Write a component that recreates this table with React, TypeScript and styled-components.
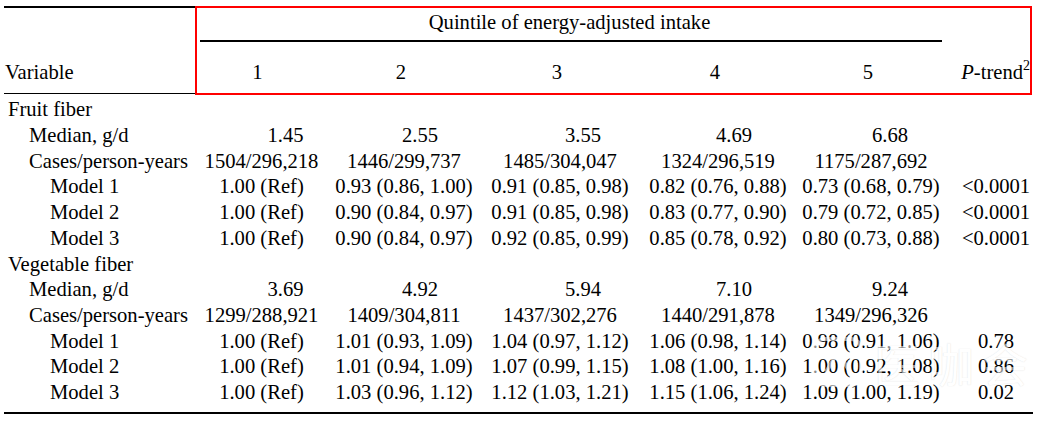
import React from 'react';
import styled, { createGlobalStyle } from 'styled-components';

const Global = createGlobalStyle`
  html, body { margin: 0; padding: 0; background: #fff; overflow: hidden; }
  body { font-family: "Liberation Serif", "Times New Roman", serif; color: #000; }
`;

const COLS = '195px 125px 160px 152px 164px 142px 108px';
const ROW_H = 25.7;

const Page = styled.div`
  position: relative;
  width: 1043px;
  height: 423px;
  padding: 6px 0 0 4px;
  box-sizing: border-box;
  font-size: 20.6px;
  line-height: ${ROW_H}px;
`;

const HeaderRow = styled.div`
  display: grid;
  grid-template-columns: 191px 837px;
  align-items: start;
`;

const VariableCell = styled.div`
  height: 88px;
  box-sizing: border-box;
  border-top: 2px solid #000;
  border-bottom: 1px solid #000;
  display: flex;
  align-items: flex-end;
  padding: 0 0 6.9px 1px;
`;

const HighlightBox = styled.div`
  height: 89px;
  box-sizing: border-box;
  border: 2px solid #f00;
  display: grid;
  grid-template-columns: 127px 160px 152px 164px 142px 1fr;
  grid-template-rows: auto auto auto;
  align-content: start;
`;

const QuintileTitle = styled.div`
  grid-row: 1;
  grid-column: 1 / 6;
  text-align: center;
  padding-top: 2px;
`;

const Rule = styled.div`
  grid-row: 2;
  grid-column: 1 / 6;
  height: 2px;
  margin: 4.3px 0 0 3px;
  background: #000;
`;

const ColNum = styled.div<{ $end?: boolean }>`
  grid-row: 3;
  margin-top: 18.4px;
  text-align: ${(p) => (p.$end ? 'right' : 'center')};
  padding-right: ${(p) => (p.$end ? '0' : '6px')};
  white-space: nowrap;
`;

const Italic = styled.i`
  font-style: italic;
`;

const Sup = styled.sup`
  font-size: 14px;
  line-height: 0;
  vertical-align: 9px;
`;

const Body = styled.div`
  padding-top: 2.4px;
`;

const Row = styled.div`
  display: grid;
  grid-template-columns: ${COLS};
  height: ${ROW_H}px;
`;

const Label = styled.div<{ $level: number }>`
  padding-left: ${(p) => 4 + p.$level * 21}px;
  white-space: nowrap;
`;

const Value = styled.div<{ $shift?: number }>`
  text-align: center;
  white-space: nowrap;
  padding-left: ${(p) => (p.$shift ?? 0) * 2}px;
`;

const BottomRule = styled.div`
  width: 1029px;
  height: 2px;
  margin-top: 6.4px;
  background: #000;
`;

const Watermark = styled.div`
  position: absolute;
  left: 812px;
  top: 334px;
  display: flex;
  align-items: center;
  gap: 10px;
  opacity: 0.55;
  pointer-events: none;
`;

const WatermarkText = styled.div`
  font-family: "Noto Sans CJK SC", sans-serif;
  font-size: 46px;
  line-height: 56px;
  letter-spacing: 8px;
  color: #fff;
  text-shadow: 0 0 1px rgba(0, 0, 0, 0.25);
`;

type Section = {
  name: string;
  median: string[];
  cases: string[];
  models: { name: string; values: string[]; p: string }[];
};

const MEDIAN_SHIFT = [24, 16, 23, 16, 19];

const data: Section[] = [
  {
    name: 'Fruit fiber',
    median: ['1.45', '2.55', '3.55', '4.69', '6.68'],
    cases: ['1504/296,218', '1446/299,737', '1485/304,047', '1324/296,519', '1175/287,692'],
    models: [
      {
        name: 'Model 1',
        values: ['1.00 (Ref)', '0.93 (0.86, 1.00)', '0.91 (0.85, 0.98)', '0.82 (0.76, 0.88)', '0.73 (0.68, 0.79)'],
        p: '<0.0001',
      },
      {
        name: 'Model 2',
        values: ['1.00 (Ref)', '0.90 (0.84, 0.97)', '0.91 (0.85, 0.98)', '0.83 (0.77, 0.90)', '0.79 (0.72, 0.85)'],
        p: '<0.0001',
      },
      {
        name: 'Model 3',
        values: ['1.00 (Ref)', '0.90 (0.84, 0.97)', '0.92 (0.85, 0.99)', '0.85 (0.78, 0.92)', '0.80 (0.73, 0.88)'],
        p: '<0.0001',
      },
    ],
  },
  {
    name: 'Vegetable fiber',
    median: ['3.69', '4.92', '5.94', '7.10', '9.24'],
    cases: ['1299/288,921', '1409/304,811', '1437/302,276', '1440/291,878', '1349/296,326'],
    models: [
      {
        name: 'Model 1',
        values: ['1.00 (Ref)', '1.01 (0.93, 1.09)', '1.04 (0.97, 1.12)', '1.06 (0.98, 1.14)', '0.98 (0.91, 1.06)'],
        p: '0.78',
      },
      {
        name: 'Model 2',
        values: ['1.00 (Ref)', '1.01 (0.94, 1.09)', '1.07 (0.99, 1.15)', '1.08 (1.00, 1.16)', '1.00 (0.92, 1.08)'],
        p: '0.86',
      },
      {
        name: 'Model 3',
        values: ['1.00 (Ref)', '1.03 (0.96, 1.12)', '1.12 (1.03, 1.21)', '1.15 (1.06, 1.24)', '1.09 (1.00, 1.19)'],
        p: '0.02',
      },
    ],
  },
];

export default function App() {
  return (
    <>
      <Global />
      <Page>
        <HeaderRow>
          <VariableCell>Variable</VariableCell>
          <HighlightBox>
            <QuintileTitle>Quintile of energy-adjusted intake</QuintileTitle>
            <Rule />
            {['1', '2', '3', '4', '5'].map((n) => (
              <ColNum key={n}>{n}</ColNum>
            ))}
            <ColNum $end>
              <Italic>P</Italic>-trend<Sup>2</Sup>
            </ColNum>
          </HighlightBox>
        </HeaderRow>
        <Body>
          {data.map((s) => (
            <React.Fragment key={s.name}>
              <Row>
                <Label $level={0}>{s.name}</Label>
              </Row>
              <Row>
                <Label $level={1}>Median, g/d</Label>
                {s.median.map((v, i) => (
                  <Value key={i} $shift={MEDIAN_SHIFT[i]}>
                    {v}
                  </Value>
                ))}
              </Row>
              <Row>
                <Label $level={1}>Cases/person-years</Label>
                {s.cases.map((v, i) => (
                  <Value key={i}>{v}</Value>
                ))}
              </Row>
              {s.models.map((m) => (
                <Row key={m.name}>
                  <Label $level={2}>{m.name}</Label>
                  {m.values.map((v, i) => (
                    <Value key={i}>{v}</Value>
                  ))}
                  <Value>{m.p}</Value>
                </Row>
              ))}
            </React.Fragment>
          ))}
        </Body>
        <BottomRule />
        <Watermark>
          <svg width="52" height="52" viewBox="0 0 52 52" fill="none">
            <rect x="3" y="3" width="46" height="46" rx="10" stroke="#fff" strokeWidth="4" />
            <path d="M14 36 L26 16 L38 36" stroke="#fff" strokeWidth="4" />
          </svg>
          <WatermarkText>医咖会</WatermarkText>
        </Watermark>
      </Page>
    </>
  );
}
